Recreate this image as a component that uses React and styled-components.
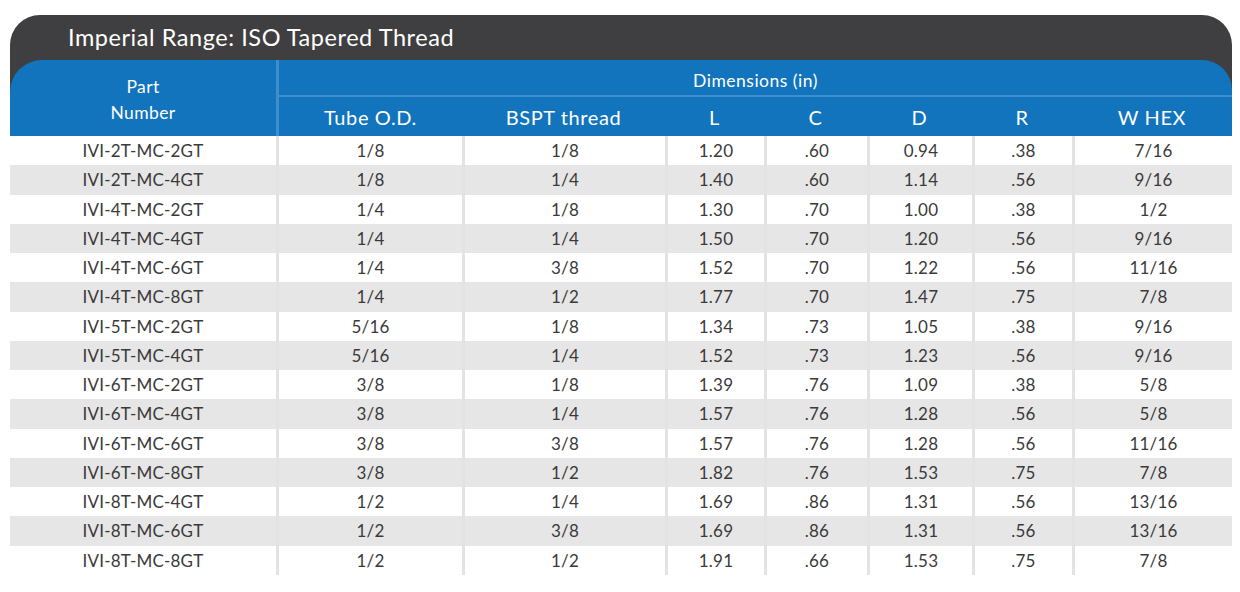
import React from "react";
import styled, { createGlobalStyle } from "styled-components";

const Global = createGlobalStyle`
  html, body { margin: 0; padding: 0; background: #ffffff; }
  body { font-family: Lato, "Open Sans", sans-serif; }
`;

const COLS = "266px 186px 203px 99px 103px 105px 100px 160px";
const SUBCOLS = "183px 203px 99px 103px 105px 100px 160px";

const Page = styled.div`
  padding: 15px 8px 17px 10px;
  width: 1222px;
`;

const TopBlock = styled.div`
  background: #3f3f41;
  border-radius: 30px 30px 0 0;
`;

const Title = styled.div`
  height: 45px;
  box-sizing: border-box;
  padding: 8px 0 0 58px;
  color: #ffffff;
  font-size: 23.5px;
  line-height: 28px;
  letter-spacing: 0.55px;
`;

const BlueHead = styled.div`
  background: #1174bd;
  border-radius: 32px 30px 0 0;
  display: grid;
  grid-template-columns: 269px 953px;
  height: 76px;
  color: #ffffff;
`;

const PartHead = styled.div`
  border-right: 3px solid #3f8dcc;
  display: flex;
  flex-direction: column;
  align-items: center;
  justify-content: center;
  font-size: 17.5px;
  line-height: 26px;
  letter-spacing: 0.4px;
  box-sizing: border-box;
  padding-top: 4px;
`;

const DimBlock = styled.div`
  display: flex;
  flex-direction: column;
`;

const DimTitle = styled.div`
  height: 37px;
  border-bottom: 2px solid #3f8dcc;
  display: flex;
  align-items: center;
  justify-content: center;
  font-size: 17.5px;
  letter-spacing: 0.5px;
  padding-top: 6px;
  box-sizing: border-box;
`;

const SubRow = styled.div`
  display: grid;
  grid-template-columns: ${SUBCOLS};
  height: 37px;
`;

const SubCell = styled.div`
  display: flex;
  align-items: center;
  justify-content: center;
  font-size: 20px;
  letter-spacing: 0.6px;
  padding-top: 2px;
`;

const Body = styled.div`
  display: grid;
  grid-template-columns: ${COLS};
  grid-auto-rows: 29.25px;
`;

const Cell = styled.div`
  display: flex;
  align-items: center;
  justify-content: center;
  font-size: 17px;
  letter-spacing: 0.2px;
  color: #3a3a3a;
  background: ${(p) => (p.$shade ? "#e6e6e6" : "#ffffff")};
  border-left: ${(p) => (p.$first ? "none" : "3px solid #e3e3e3")};
  box-sizing: border-box;
`;

const rows = [
  ["IVI-2T-MC-2GT", "1/8", "1/8", "1.20", ".60", "0.94", ".38", "7/16"],
  ["IVI-2T-MC-4GT", "1/8", "1/4", "1.40", ".60", "1.14", ".56", "9/16"],
  ["IVI-4T-MC-2GT", "1/4", "1/8", "1.30", ".70", "1.00", ".38", "1/2"],
  ["IVI-4T-MC-4GT", "1/4", "1/4", "1.50", ".70", "1.20", ".56", "9/16"],
  ["IVI-4T-MC-6GT", "1/4", "3/8", "1.52", ".70", "1.22", ".56", "11/16"],
  ["IVI-4T-MC-8GT", "1/4", "1/2", "1.77", ".70", "1.47", ".75", "7/8"],
  ["IVI-5T-MC-2GT", "5/16", "1/8", "1.34", ".73", "1.05", ".38", "9/16"],
  ["IVI-5T-MC-4GT", "5/16", "1/4", "1.52", ".73", "1.23", ".56", "9/16"],
  ["IVI-6T-MC-2GT", "3/8", "1/8", "1.39", ".76", "1.09", ".38", "5/8"],
  ["IVI-6T-MC-4GT", "3/8", "1/4", "1.57", ".76", "1.28", ".56", "5/8"],
  ["IVI-6T-MC-6GT", "3/8", "3/8", "1.57", ".76", "1.28", ".56", "11/16"],
  ["IVI-6T-MC-8GT", "3/8", "1/2", "1.82", ".76", "1.53", ".75", "7/8"],
  ["IVI-8T-MC-4GT", "1/2", "1/4", "1.69", ".86", "1.31", ".56", "13/16"],
  ["IVI-8T-MC-6GT", "1/2", "3/8", "1.69", ".86", "1.31", ".56", "13/16"],
  ["IVI-8T-MC-8GT", "1/2", "1/2", "1.91", ".66", "1.53", ".75", "7/8"],
];

const subHeads = ["Tube O.D.", "BSPT thread", "L", "C", "D", "R", "W HEX"];

export default function App() {
  return (
    <Page>
      <Global />
      <TopBlock>
        <Title>Imperial Range: ISO Tapered Thread</Title>
        <BlueHead>
          <PartHead>
            <span>Part</span>
            <span>Number</span>
          </PartHead>
          <DimBlock>
            <DimTitle>Dimensions (in)</DimTitle>
            <SubRow>
              {subHeads.map((h) => (
                <SubCell key={h}>{h}</SubCell>
              ))}
            </SubRow>
          </DimBlock>
        </BlueHead>
      </TopBlock>
      <Body>
        {rows.map((r, i) =>
          r.map((v, j) => (
            <Cell key={`${i}-${j}`} $shade={i % 2 === 1} $first={j === 0}>
              {v}
            </Cell>
          ))
        )}
      </Body>
    </Page>
  );
}
